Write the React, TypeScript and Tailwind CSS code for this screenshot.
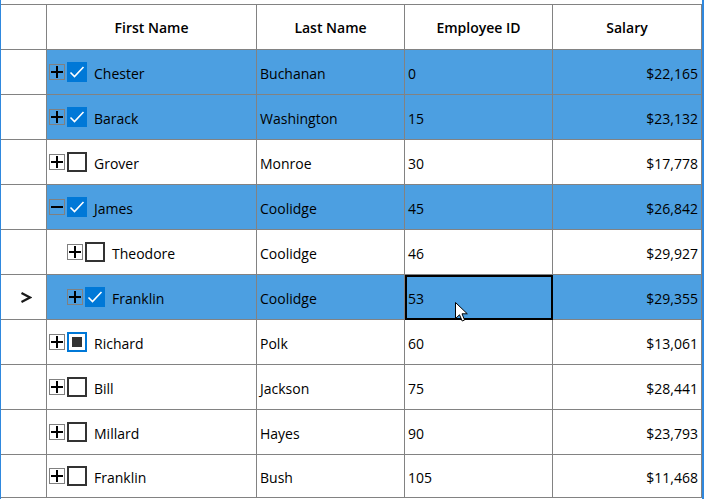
import React from "react";

type Check = "on" | "off" | "mixed";

type Employee = {
  first: string;
  last: string;
  id: number;
  salary: string;
  level: number;
  expanded?: boolean;
  check: Check;
  selected?: boolean;
  current?: boolean;
};

const employees: Employee[] = [
  { first: "Chester", last: "Buchanan", id: 0, salary: "$22,165", level: 0, check: "on", selected: true },
  { first: "Barack", last: "Washington", id: 15, salary: "$23,132", level: 0, check: "on", selected: true },
  { first: "Grover", last: "Monroe", id: 30, salary: "$17,778", level: 0, check: "off" },
  { first: "James", last: "Coolidge", id: 45, salary: "$26,842", level: 0, expanded: true, check: "on", selected: true },
  { first: "Theodore", last: "Coolidge", id: 46, salary: "$29,927", level: 1, check: "off" },
  { first: "Franklin", last: "Coolidge", id: 53, salary: "$29,355", level: 1, check: "on", selected: true, current: true },
  { first: "Richard", last: "Polk", id: 60, salary: "$13,061", level: 0, check: "mixed" },
  { first: "Bill", last: "Jackson", id: 75, salary: "$28,441", level: 0, check: "off" },
  { first: "Millard", last: "Hayes", id: 90, salary: "$23,793", level: 0, check: "off" },
  { first: "Franklin", last: "Bush", id: 105, salary: "$11,468", level: 0, check: "off" },
];

const font = { fontFamily: '"Segoe UI", "Open Sans", "Noto Sans", sans-serif' };

function Expander({ expanded }: { expanded?: boolean }) {
  return (
    <svg width="16" height="16" viewBox="0 0 16 16" className="shrink-0">
      <rect x="0.5" y="0.5" width="15" height="15" fill="none" stroke="#808080" />
      <path d="M2 8H14" stroke="#000" strokeWidth="2" />
      {!expanded && <path d="M8 2V14" stroke="#000" strokeWidth="2" />}
    </svg>
  );
}

function CheckBox({ state }: { state: Check }) {
  if (state === "on") {
    return (
      <div className="w-5 h-5 shrink-0 bg-[#0078d7] flex items-center justify-center">
        <svg width="20" height="20" viewBox="0 0 20 20">
          <path d="M3.5 10.5L7.5 14.5L16.5 5" fill="none" stroke="#fff" strokeWidth="1.6" />
        </svg>
      </div>
    );
  }
  if (state === "mixed") {
    return (
      <div className="w-5 h-5 shrink-0 bg-white border-2 border-[#0078d7] flex items-center justify-center">
        <div className="w-[10px] h-[10px] bg-[#333333]" />
      </div>
    );
  }
  return <div className="w-5 h-5 shrink-0 bg-white border-2 border-[#333333]" />;
}

function RowIndicator() {
  return (
    <svg width="12" height="11" viewBox="0 0 12 11">
      <path d="M1.5 1L10 5.5L1.5 10" fill="none" stroke="#1a1a1a" strokeWidth="2.2" />
    </svg>
  );
}

function Cursor() {
  return (
    <svg width="13" height="20" viewBox="0 0 13 20" className="absolute left-[454px] top-[302px]">
      <path
        d="M0.5 0.5V16.5L4.5 12.8L7.2 19L9.6 18L7 11.8H12.3Z"
        fill="#fff"
        stroke="#000"
        strokeWidth="1"
        strokeLinejoin="round"
      />
    </svg>
  );
}

export default function App() {
  return (
    <div
      className="relative w-[704px] h-[499px] overflow-hidden bg-white pt-1 border-l border-r-2 border-[#2f88de] text-[14px] text-black"
      style={font}
    >
      <div className="border-t border-[#828282]">
        {/* header */}
        <div className="flex h-[45px] border-b border-[#828282] font-semibold">
          <div className="w-[46px] border-r border-[#828282]" />
          <div className="w-[210px] border-r border-[#828282] flex items-center justify-center">First Name</div>
          <div className="w-[148px] border-r border-[#828282] flex items-center justify-center">Last Name</div>
          <div className="w-[148px] border-r border-[#828282] flex items-center justify-center">Employee ID</div>
          <div className="w-[149px] border-r border-[#828282] flex items-center justify-center">Salary</div>
        </div>

        {employees.map((e, i) => {
          const bg = e.selected ? "bg-[#4c9fe1]" : "bg-white";
          const last = i === employees.length - 1;
          return (
            <div
              key={i}
              className={`flex border-b border-[#828282] ${last ? "h-[43px]" : "h-[45px]"}`}
            >
              <div className="w-[46px] border-r border-[#828282] flex items-center justify-center pl-[5px]">
                {e.current && <RowIndicator />}
              </div>
              <div
                className={`w-[210px] border-r border-[#828282] flex items-center ${bg} ${
                  e.level === 1 ? "pl-[20px]" : "pl-[2px]"
                }`}
              >
                <Expander expanded={e.expanded} />
                <div className="ml-[2px]">
                  <CheckBox state={e.check} />
                </div>
                <span className="ml-[7px] mt-[2px]">{e.first}</span>
              </div>
              <div className={`w-[148px] border-r border-[#828282] flex items-center pl-[3px] ${bg}`}>
                <span className="mt-[2px]">{e.last}</span>
              </div>
              <div className={`relative w-[148px] border-r border-[#828282] flex items-center pl-[3px] ${bg}`}>
                <span className="mt-[2px]">{e.id}</span>
                {e.current && <div className="absolute top-0 left-0 -right-px -bottom-px border-2 border-black" />}
              </div>
              <div className={`w-[149px] border-r border-[#828282] flex items-center justify-end pr-[3px] ${bg}`}>
                <span className="mt-[2px]">{e.salary}</span>
              </div>
            </div>
          );
        })}
      </div>
      <Cursor />
    </div>
  );
}
